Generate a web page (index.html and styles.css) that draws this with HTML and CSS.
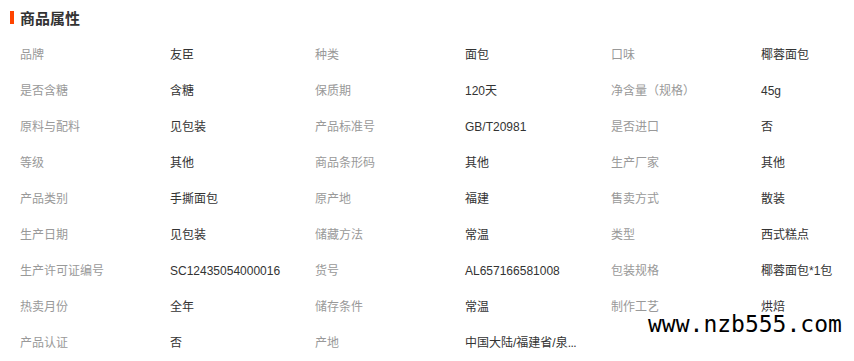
FILE: index.html
```html
<!DOCTYPE html>
<html lang="zh-CN">
<head>
<meta charset="utf-8">
<title>商品属性</title>
<link rel="stylesheet" href="styles.css">
</head>
<body>
<section class="attrs">
  <h2 class="attrs-title"><span class="attrs-bar"></span>商品属性</h2>
  <div class="attrs-grid">
    <span class="k">品牌</span><span class="v">友臣</span>
    <span class="k">种类</span><span class="v">面包</span>
    <span class="k">口味</span><span class="v">椰蓉面包</span>

    <span class="k">是否含糖</span><span class="v">含糖</span>
    <span class="k">保质期</span><span class="v">120天</span>
    <span class="k">净含量（规格）</span><span class="v">45g</span>

    <span class="k">原料与配料</span><span class="v">见包装</span>
    <span class="k">产品标准号</span><span class="v">GB/T20981</span>
    <span class="k">是否进口</span><span class="v">否</span>

    <span class="k">等级</span><span class="v">其他</span>
    <span class="k">商品条形码</span><span class="v">其他</span>
    <span class="k">生产厂家</span><span class="v">其他</span>

    <span class="k">产品类别</span><span class="v">手撕面包</span>
    <span class="k">原产地</span><span class="v">福建</span>
    <span class="k">售卖方式</span><span class="v">散装</span>

    <span class="k">生产日期</span><span class="v">见包装</span>
    <span class="k">储藏方法</span><span class="v">常温</span>
    <span class="k">类型</span><span class="v">西式糕点</span>

    <span class="k">生产许可证编号</span><span class="v">SC12435054000016</span>
    <span class="k">货号</span><span class="v">AL657166581008</span>
    <span class="k">包装规格</span><span class="v">椰蓉面包*1包</span>

    <span class="k">热卖月份</span><span class="v">全年</span>
    <span class="k">储存条件</span><span class="v">常温</span>
    <span class="k">制作工艺</span><span class="v">烘焙</span>

    <span class="k">产品认证</span><span class="v">否</span>
    <span class="k">产地</span><span class="v">中国大陆/福建省/泉<span class="dots">...</span></span>
    <span class="k"></span><span class="v"></span>
  </div>
  <div class="watermark">www.nzb555.com</div>
</section>
</body>
</html>
```

FILE: styles.css
```css
html, body {
  margin: 0;
  padding: 0;
  background: #fff;
}

body {
  font-family: "Liberation Sans", "Noto Sans CJK SC", sans-serif;
  font-size: 12px;
  color: #333;
  width: 854px;
  height: 361px;
  overflow: hidden;
}

.attrs {
  position: relative;
  height: 361px;
}

.attrs-title {
  display: flex;
  align-items: center;
  height: 35px;
  margin: 0;
  padding-left: 10px;
  font-size: 15px;
  font-weight: bold;
  color: #333;
}

.attrs-bar {
  display: block;
  width: 4px;
  height: 13px;
  background: #ff4400;
  margin-right: 6px;
}

.attrs-grid {
  display: grid;
  grid-template-columns: 150px 145px 150px 146px 150px 1fr;
  grid-auto-rows: 36px;
  padding: 2px 0 0 20px;
  align-items: center;
}

.k,
.v {
  line-height: 15px;
  white-space: nowrap;
}

.k {
  color: #999;
}

.v {
  color: #333;
}

.dots {
  letter-spacing: -0.5px;
}

.watermark {
  position: absolute;
  left: 648px;
  top: 316px;
  font-family: "DejaVu Sans Mono", monospace;
  font-size: 23px;
  line-height: 16px;
  color: #000;
}
```
